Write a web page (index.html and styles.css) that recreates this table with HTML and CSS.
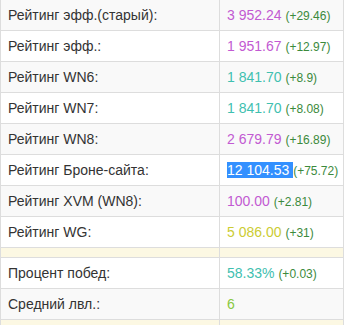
FILE: index.html
```html
<!DOCTYPE html>
<html>
<head>
<meta charset="utf-8">
<link rel="stylesheet" href="styles.css">
</head>
<body>
<table class="stats">
  <tr><td class="label">Рейтинг эфф.(старый):</td><td class="val"><span class="purple">3 952.24</span> <span class="delta">(+29.46)</span></td></tr>
  <tr><td class="label">Рейтинг эфф.:</td><td class="val"><span class="purple">1 951.67</span> <span class="delta">(+12.97)</span></td></tr>
  <tr><td class="label">Рейтинг WN6:</td><td class="val"><span class="teal">1 841.70</span> <span class="delta">(+8.9)</span></td></tr>
  <tr><td class="label">Рейтинг WN7:</td><td class="val"><span class="teal">1 841.70</span> <span class="delta">(+8.08)</span></td></tr>
  <tr><td class="label">Рейтинг WN8:</td><td class="val"><span class="purple">2 679.79</span> <span class="delta">(+16.89)</span></td></tr>
  <tr><td class="label">Рейтинг Броне-сайта:</td><td class="val"><span class="sel">12 104.53 </span><span class="delta">(+75.72)</span></td></tr>
  <tr><td class="label">Рейтинг XVM (WN8):</td><td class="val"><span class="purple">100.00</span> <span class="delta">(+2.81)</span></td></tr>
  <tr><td class="label">Рейтинг WG:</td><td class="val"><span class="yellow">5 086.00</span> <span class="delta">(+31)</span></td></tr>
  <tr class="warn"><td></td><td></td></tr>
  <tr><td class="label">Процент побед:</td><td class="val"><span class="teal">58.33%</span> <span class="delta">(+0.03)</span></td></tr>
  <tr><td class="label">Средний лвл.:</td><td class="val"><span class="green">6</span></td></tr>
  <tr class="warn"><td></td><td></td></tr>
</table>
</body>
</html>
```
FILE: styles.css
```css
html, body {
  margin: 0;
  padding: 0;
  background: #fff;
}
body {
  font-family: "Liberation Sans", Arial, sans-serif;
  font-size: 14px;
  color: #333;
  overflow: hidden;
}
.stats {
  border-collapse: collapse;
  table-layout: fixed;
  width: 344px;
  margin-top: -1px;
}
.stats td {
  border: 1px solid #ddd;
  padding: 8px 7px;
  line-height: 14px;
  height: 14px;
  vertical-align: middle;
  white-space: nowrap;
}
.stats tr:nth-child(odd) td {
  background: #f9f9f9;
}
.stats td.label {
  width: 204px;
}
.stats td.val {
  padding-right: 2px;
}
.stats tr.warn td {
  background: #fcf8e3;
  padding: 0;
  height: 9px;
  line-height: 9px;
}
.purple { color: #c25ad2; }
.teal { color: #3fc0b0; }
.yellow { color: #cccc33; }
.green { color: #88c840; }
.delta { color: #3c8a3c; font-size: 12px; line-height: 12px; }
.sel { background: #3390ff; color: #fff; }
```
